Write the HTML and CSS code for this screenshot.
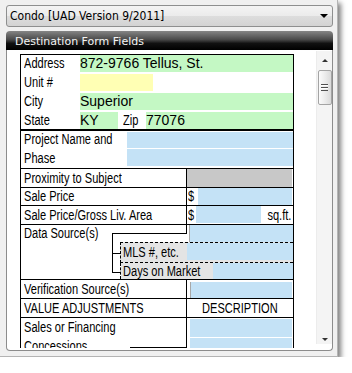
FILE: index.html
```html
<!DOCTYPE html>
<html lang="en">
<head>
  <meta charset="UTF-8" />
  <title>Destination Form Fields</title>
  <link rel="stylesheet" href="styles.css">
</head>
<body>

  <div class="window">
    <div class="combo">
      <span class="combo-text">Condo [UAD Version 9/2011]</span>
      <span class="caret"></span>
    </div>

    <div class="panel">
      <div class="panel-head">Destination Form Fields</div>
      <div class="panel-body">
        <div class="viewport">
          <div class="form">

            <div class="addr">
              <div class="addr-row">
                <span class="lbl"><span class="n">Address</span></span>
                <span class="val green">872-9766 Tellus, St.</span>
              </div>
              <div class="addr-row">
                <span class="lbl"><span class="n">Unit #</span></span>
                <span class="val yellow unit"></span>
              </div>
              <div class="addr-row">
                <span class="lbl"><span class="n">City</span></span>
                <span class="val green">Superior</span>
              </div>
              <div class="addr-row">
                <span class="lbl"><span class="n">State</span></span>
                <span class="val green state">KY</span>
                <span class="lbl zip"><span class="n">Zip</span></span>
                <span class="val green">77076</span>
              </div>
            </div>

            <div class="tbl">
              <div class="row pn">
                <div class="pn-lbl"><span class="n">Project Name and<br>Phase</span></div>
                <div class="pn-fields">
                  <span class="fld blue"></span>
                  <span class="fld blue tall"></span>
                </div>
              </div>

              <div class="row two prox">
                <span class="c1"><span class="n">Proximity to Subject</span></span>
                <span class="c2 gray"></span>
              </div>

              <div class="row two sale">
                <span class="c1"><span class="n">Sale Price</span></span>
                <span class="c2 money">
                  <span class="cur"><span class="n">$</span></span>
                  <span class="fld blue"></span>
                </span>
              </div>

              <div class="row two gross">
                <span class="c1"><span class="n">Sale Price/Gross Liv. Area</span></span>
                <span class="c2 money">
                  <span class="cur"><span class="n">$</span></span>
                  <span class="fld blue short"></span>
                  <span class="unit-txt"><span class="n">sq.ft.</span></span>
                </span>
              </div>

              <div class="row ds">
                <span class="ds-lbl"><span class="n">Data Source(s)</span></span>
                <span class="ds-hook"></span>
                <span class="ds-field"><span class="fld blue edge"></span></span>
                <span class="ds-stem"></span>
                <span class="ds-tick"></span>
                <div class="sub mls">
                  <span class="sub-lbl"><span class="n">MLS #, etc.</span></span>
                  <span class="fld blue"></span>
                </div>
                <div class="sub dom">
                  <span class="sub-lbl"><span class="n">Days on Market</span></span>
                  <span class="fld blue"></span>
                </div>
              </div>

              <div class="row two verif">
                <span class="c1"><span class="n">Verification Source(s)</span></span>
                <span class="c2"><span class="fld blue edge"></span></span>
              </div>

              <div class="row two adj">
                <span class="c1"><span class="n">VALUE ADJUSTMENTS</span></span>
                <span class="c2 center"><span class="n">DESCRIPTION</span></span>
              </div>

              <div class="row two sales">
                <span class="c1"><span class="n">Sales or Financing<br>Concessions</span></span>
                <span class="c2 stack">
                  <span class="fld blue big"></span>
                  <span class="fld blue big"></span>
                </span>
              </div>
            </div>

          </div>
        </div>

        <div class="scrollbar">
          <span class="arrow up"></span>
          <span class="thumb"><span class="grip"></span></span>
          <span class="track"></span>
          <span class="arrow down"></span>
        </div>
      </div>
    </div>
  </div>

</body>
</html>
```

FILE: styles.css
```css
body {
  margin: 0;
  background: #fff;
}

.window {
  width: 338px;
  height: 357px;
  box-sizing: border-box;
  background: #f0f0f0;
  border-right: 1px solid #b4b4b4;
  border-bottom: 1px solid #b4b4b4;
  padding: 5px 0 0 6px;
  box-shadow: 3px 3px 5px rgba(0, 0, 0, 0.5);
}

/* combo box */
.combo {
  width: 327px;
  height: 22px;
  box-sizing: border-box;
  border: 1px solid #8e8f8f;
  border-radius: 3px;
  background: linear-gradient(#f4f4f4, #ebebeb 50%, #dddddd 51%, #d3d3d3);
  display: flex;
  align-items: center;
  padding: 0 4px 0 3px;
  font: 12px "DejaVu Sans Condensed", "DejaVu Sans", sans-serif;
  color: #000;
}

.caret {
  margin-left: auto;
  width: 0;
  height: 0;
  border-left: 4px solid transparent;
  border-right: 4px solid transparent;
  border-top: 4px solid #000;
}

/* panel */
.panel {
  width: 327px;
  margin-top: 4px;
}

.panel-head {
  height: 19px;
  box-sizing: border-box;
  border-radius: 4px 4px 0 0;
  background: linear-gradient(#858585, #4a4a4a 45%, #111 65%, #000);
  color: #f4f4f4;
  font: 11px "DejaVu Sans", sans-serif;
  line-height: 17px;
  padding: 2px 0 0 9px;
}

.panel-body {
  display: flex;
  height: 301px;
  box-sizing: border-box;
  background: #fff;
  border: 1px solid #8c8c8c;
  border-top: 0;
  border-radius: 0 0 4px 4px;
}

.viewport {
  flex: 1;
  height: 298px;
  box-sizing: border-box;
  padding: 4px 0 0 13px;
  overflow: hidden;
}

/* form */
.form {
  width: 274px;
  font: 14px "Liberation Sans", Arial, sans-serif;
  color: #000;
}

/* labels use a narrow face: squeeze Arial since no narrow cut is installed */
.n {
  display: inline-block;
  white-space: nowrap;
  transform: scaleX(0.79);
  transform-origin: 0 50%;
}

.green { background: #c4f8c4; }
.yellow { background: #ffffb4; }
.blue { background: #c4e2f6; }
.gray { background: #c8c8c8; }

.addr {
  border: 1px solid #000;
}

.addr-row {
  display: flex;
  height: 17px;
  line-height: 17px;
  margin-bottom: 2px;
}

.addr-row:last-child {
  margin-bottom: 0;
}

.lbl {
  width: 59px;
  padding-left: 3px;
  box-sizing: border-box;
  flex: none;
  overflow: hidden;
}

.val {
  flex: 1;
  line-height: 17px;
}

.val.unit {
  flex: none;
  width: 73px;
}

.val.state {
  flex: none;
  width: 38px;
}

.lbl.zip {
  width: 28px;
  padding-left: 5px;
}

.tbl {
  border: 1px solid #000;
  border-bottom: 0;
}

.row {
  border-bottom: 1px solid #000;
}

.fld {
  display: block;
}

.pn {
  display: flex;
  height: 37px;
}

.pn-lbl {
  width: 106px;
  padding-left: 3px;
  box-sizing: border-box;
  line-height: 19px;
  margin-top: -1px;
}

.pn-fields {
  flex: 1;
  display: flex;
  flex-direction: column;
  gap: 1px;
  padding-top: 1px;
}

.pn-fields .fld {
  height: 16px;
}

.pn-fields .tall {
  height: 17px;
}

.two {
  display: grid;
  grid-template-columns: 165px 106px;
}

.c1 {
  padding-left: 3px;
  white-space: nowrap;
}

.c2 {
  border-left: 1px solid #000;
}

.prox { height: 18px; line-height: 18px; }
.sale { height: 17px; line-height: 17px; }
.gross { height: 18px; line-height: 18px; }
.verif { height: 18px; line-height: 18px; }
.adj { height: 18px; line-height: 18px; }
.sales { height: 40px; line-height: 19px; }

.money {
  display: flex;
  align-items: stretch;
}

.cur {
  width: 11px;
  padding-left: 1px;
  box-sizing: border-box;
}

.money .fld {
  flex: 1;
  margin-bottom: 1px;
}

.sale .money .fld {
  margin-bottom: 0;
}

.money .short {
  flex: none;
  width: 65px;
}

.unit-txt {
  flex: 1;
  text-align: right;
  padding-right: 3px;
}

.unit-txt .n {
  transform-origin: 100% 50%;
}

.verif .c2 .fld {
  height: 16px;
  margin: 2px 0 0 3px;
}

.edge {
  border-left: 1px solid #a8a8a8;
}

.center {
  text-align: center;
}

.center .n {
  transform-origin: 50% 50%;
}

.sales .c1 {
  background: linear-gradient(#000, #000) no-repeat 109px 29px / 56px 1px;
}

.stack .fld {
  margin-left: 3px;
  height: 18px;
  margin-top: 1px;
}

/* data source group */
.ds {
  display: grid;
  grid-template-columns: 91px 8px 67px 106px;
  grid-template-rows: 17px 21px 16px;
  line-height: 17px;
}

.ds-lbl {
  grid-column: 1;
  grid-row: 1;
  padding-left: 3px;
  white-space: nowrap;
}

.ds-hook {
  grid-column: 2 / 4;
  grid-row: 1;
  height: 8px;
  border-right: 1px solid #000;
  border-bottom: 1px solid #000;
}

.ds-field {
  grid-column: 4;
  grid-row: 1;
  padding-left: 2px;
}

.ds-field .fld {
  height: 17px;
}

.ds-stem {
  grid-column: 2;
  grid-row: 1 / 4;
  align-self: start;
  margin-top: 8px;
  height: 39px;
  border-left: 1px solid #000;
  border-bottom: 1px solid #000;
}

.ds-tick {
  grid-column: 2;
  grid-row: 2;
  align-self: start;
  height: 11px;
  border-bottom: 1px solid #000;
}

.sub {
  grid-column: 3 / 5;
  display: flex;
  border-left: 1px dashed #000;
}

.sub-lbl {
  background: #e4e4e4;
  padding-left: 2px;
  box-sizing: border-box;
  white-space: nowrap;
}

.mls {
  grid-row: 2;
  border-top: 1px dashed #000;
  border-bottom: 1px dashed #000;
  background: #e4e4e4;
}

.mls .sub-lbl {
  width: 66px;
  line-height: 18px;
}

.mls .fld {
  flex: 1;
  height: 17px;
}

.dom {
  grid-row: 3;
}

.dom .sub-lbl {
  width: 92px;
  line-height: 16px;
}

.dom .fld {
  flex: 1;
  height: 16px;
}

/* scrollbar */
.scrollbar {
  width: 16px;
  height: 293px;
  margin-top: 1px;
  box-sizing: border-box;
  background: #f4f4f4;
  border-left: 1px solid #ececec;
  display: flex;
  flex-direction: column;
  align-items: center;
}

.arrow {
  width: 0;
  height: 0;
  border-left: 3px solid transparent;
  border-right: 3px solid transparent;
}

.arrow.up {
  margin-top: 8px;
  border-bottom: 3px solid #333;
}

.arrow.down {
  margin-bottom: 3px;
  border-top: 3px solid #333;
}

.thumb {
  margin-top: 8px;
  width: 14px;
  height: 35px;
  box-sizing: border-box;
  border: 1px solid #a4a4a4;
  border-radius: 2px;
  background: linear-gradient(to right, #fbfbfb, #ececec 50%, #dadada);
  display: flex;
  align-items: center;
  justify-content: center;
}

.grip {
  width: 7px;
  height: 7px;
  background: repeating-linear-gradient(#505050 0 1px, #fff 1px 2px, transparent 2px 3px);
}

.track {
  flex: 1;
}
```
